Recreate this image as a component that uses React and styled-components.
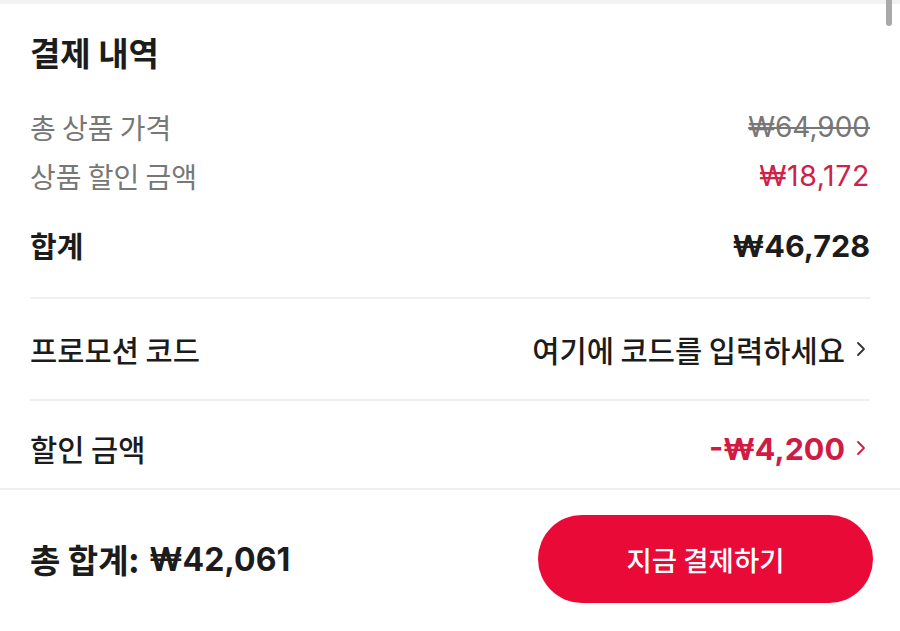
import React from 'react'
import styled, { createGlobalStyle } from 'styled-components'

const GlobalStyle = createGlobalStyle`
  html, body {
    margin: 0;
    padding: 0;
    background: #ffffff;
  }
  body {
    font-family: "Noto Sans CJK KR", "Noto Sans", sans-serif;
    color: #1c1c1c;
  }
`

const red = '#d01b45'
const numFont = `Inter, "Noto Sans CJK KR", sans-serif`

const Page = styled.div`
  position: relative;
  width: 900px;
  height: 631px;
  overflow: hidden;
  background: #fff;
  display: flex;
  flex-direction: column;
`

const TopStrip = styled.div`
  height: 4px;
  background: #f2f2f2;
`

const ScrollThumb = styled.div`
  position: absolute;
  top: 0;
  right: 8px;
  width: 6px;
  height: 26px;
  border-radius: 0 0 3px 3px;
  background: #a9a9a9;
`

const Content = styled.div`
  padding: 0 30px;
  flex: 1;
`

const Title = styled.h1`
  margin: 28px 0 0;
  font-size: 33px;
  font-weight: 700;
  line-height: 40px;
  color: #1c1c1c;
`

const DetailList = styled.div`
  margin-top: 30px;
`

const Row = styled.div`
  display: flex;
  align-items: center;
  justify-content: space-between;
  height: ${p => p.$h}px;
  padding-top: ${p => p.$pt || 0}px;
  box-sizing: border-box;
  border-bottom: ${p => (p.$line ? '2px solid #f0f0f0' : 'none')};
`

const Label = styled.span`
  font-size: ${p => p.$size}px;
  font-weight: ${p => p.$weight};
  color: ${p => p.$color || '#1c1c1c'};
`

const Value = styled.span`
  display: flex;
  align-items: center;
  gap: 11px;
  font-size: ${p => p.$size}px;
  font-weight: ${p => p.$weight};
  color: ${p => p.$color || '#1c1c1c'};
  svg {
    margin-right: 4px;
  }
`

const Amount = styled.span`
  font-family: ${numFont};
  font-size: ${p => p.$size}px;
  font-weight: ${p => p.$weight};
  letter-spacing: ${p => p.$ls || 0}px;
  text-decoration: ${p => (p.$strike ? 'line-through' : 'none')};
  text-decoration-thickness: 2px;
`

const TotalRow = styled(Row)`
  margin-top: 20px;
`

const Spacer = styled.div`
  height: 27px;
  border-bottom: 2px solid #f0f0f0;
`

const BottomBar = styled.div`
  border-top: 2px solid #f0f0f0;
  height: 143px;
  box-sizing: border-box;
  padding: 25px 27px 0 30px;
  display: flex;
  justify-content: space-between;
  align-items: flex-start;
`

const GrandTotal = styled.div`
  height: 88px;
  display: flex;
  align-items: center;
  gap: 10px;
  font-size: 33px;
  font-weight: 700;
  color: #1c1c1c;
`

const PayButton = styled.button`
  width: 335px;
  height: 88px;
  border: none;
  border-radius: 44px;
  background: #e90a37;
  color: #fff;
  font-family: "Noto Sans CJK KR", "Noto Sans", sans-serif;
  font-size: 27.5px;
  font-weight: 500;
  cursor: pointer;
`

const Chevron = ({ color = '#333' }) => (
  <svg width="10" height="16" viewBox="0 0 10 16" fill="none">
    <path d="M2 2l6 6-6 6" stroke={color} strokeWidth="1.8" strokeLinecap="round" strokeLinejoin="round" />
  </svg>
)

const App = () => {
  return (
    <Page>
      <GlobalStyle />
      <TopStrip />
      <ScrollThumb />
      <Content>
        <Title>결제 내역</Title>
        <DetailList>
          <Row $h={49}>
            <Label $size={28} $weight={400} $color="#777">총 상품 가격</Label>
            <Value $color="#777">
              <Amount $size={28} $weight={400} $strike>₩64,900</Amount>
            </Value>
          </Row>
          <Row $h={49}>
            <Label $size={28} $weight={400} $color="#777">상품 할인 금액</Label>
            <Value $color="#cf2149">
              <Amount $size={28.5} $weight={400} $ls={0.6}>₩18,172</Amount>
            </Value>
          </Row>
        </DetailList>
        <TotalRow $h={50}>
          <Label $size={29} $weight={700}>합계</Label>
          <Value>
            <Amount $size={30.5} $weight={700}>₩46,728</Amount>
          </Value>
        </TotalRow>
        <Spacer />
        <Row $h={102} $line>
          <Label $size={29.6} $weight={500}>프로모션 코드</Label>
          <Value $size={29.6} $weight={500}>
            여기에 코드를 입력하세요
            <Chevron />
          </Value>
        </Row>
        <Row $h={86} $pt={8}>
          <Label $size={29.6} $weight={500}>할인 금액</Label>
          <Value $color={red}>
            <Amount $size={30.5} $weight={700}>-₩4,200</Amount>
            <Chevron color={red} />
          </Value>
        </Row>
      </Content>
      <BottomBar>
        <GrandTotal>
          총 합계:
          <Amount $size={32} $weight={700}>₩42,061</Amount>
        </GrandTotal>
        <PayButton>지금 결제하기</PayButton>
      </BottomBar>
    </Page>
  )
}

export default App
